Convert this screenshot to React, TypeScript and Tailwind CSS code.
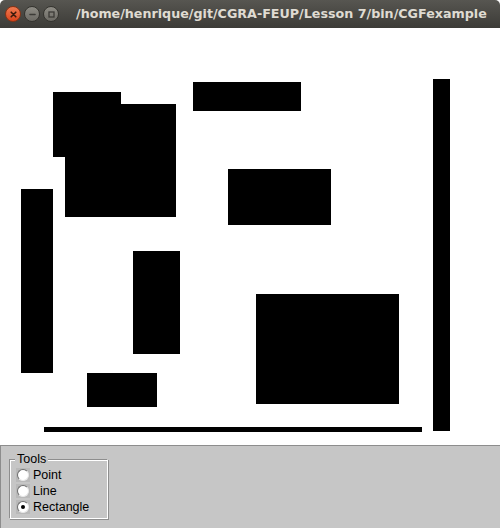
import React from 'react'

const rects = [
  { x: 53, y: 92, w: 68, h: 65 },
  { x: 65, y: 104, w: 111, h: 113 },
  { x: 193, y: 82, w: 108, h: 29 },
  { x: 228, y: 169, w: 103, h: 56 },
  { x: 21, y: 189, w: 32, h: 184 },
  { x: 133, y: 251, w: 47, h: 103 },
  { x: 87, y: 373, w: 70, h: 34 },
  { x: 256, y: 294, w: 143, h: 110 },
  { x: 433, y: 79, w: 17, h: 352 },
  { x: 44, y: 427, w: 378, h: 5 },
]

function TitleButton({ kind }: { kind: 'close' | 'min' | 'max' }) {
  const isClose = kind === 'close'
  return (
    <span
      className={`flex h-[16px] w-[16px] items-center justify-center rounded-full border ${isClose
        ? 'border-[#8a3214] bg-gradient-to-b from-[#f07a50] to-[#d9431a]'
        : 'border-[#35342f] bg-gradient-to-b from-[#8e8c85] to-[#6c6a64]'
      }`}
    >
      <svg width="9" height="9" viewBox="0 0 9 9">
        {kind === 'close' && (
          <path d="M2.2 2.2 L6.8 6.8 M6.8 2.2 L2.2 6.8" stroke="#3b1a0c" strokeWidth="1.6" strokeLinecap="round" />
        )}
        {kind === 'min' && <path d="M2 4.5 H7" stroke="#3c3b37" strokeWidth="1.6" strokeLinecap="round" />}
        {kind === 'max' && <rect x="2" y="2" width="5" height="5" fill="none" stroke="#3c3b37" strokeWidth="1.3" />}
      </svg>
    </span>
  )
}

function Radio({ label, checked }: { label: string; checked?: boolean }) {
  return (
    <div className="flex h-4 items-center">
      <span className="ml-[6px] flex h-[14px] w-[14px] items-center justify-center bg-[#b9b9b9]">
        <span className="flex h-3 w-3 items-center justify-center rounded-full border border-t-[#6e6e6e] border-l-[#6e6e6e] border-r-[#e8e8e8] border-b-[#e8e8e8] bg-white">
          {checked && <span className="h-1 w-1 rounded-full bg-black" />}
        </span>
      </span>
      <span className="ml-[3px] text-[12.5px] leading-none text-black">{label}</span>
    </div>
  )
}

export default function App() {
  return (
    <div className="flex h-[528px] w-[500px] flex-col overflow-hidden bg-white [font-family:'Liberation_Sans',Arial,sans-serif]">
      <header className="flex h-[28px] shrink-0 items-center rounded-t-[5px] bg-gradient-to-b from-[#575651] to-[#3c3b37] pl-[5px]">
        <div className="flex items-center gap-[3px]">
          <TitleButton kind="close" />
          <TitleButton kind="min" />
          <TitleButton kind="max" />
        </div>
        <span className="ml-[17px] whitespace-nowrap text-[12.7px] font-bold text-[#dfdbd2] [font-family:'DejaVu_Sans',sans-serif]">
          /home/henrique/git/CGRA-FEUP/Lesson 7/bin/CGFexample
        </span>
      </header>

      <svg className="block shrink-0" width="500" height="417" viewBox="0 28 500 417">
        <rect x="0" y="28" width="500" height="417" fill="#ffffff" />
        {rects.map((r, i) => (
          <rect key={i} x={r.x} y={r.y} width={r.w} height={r.h} fill="#000000" />
        ))}
      </svg>

      <div className="flex-1 border-t border-l border-[#8d8d8d] bg-[#c6c6c6] pl-[8px] pt-[13px]">
        <div className="relative h-[60px] w-[99px] border border-t-[#8e8e8e] border-l-[#8e8e8e] border-r-white border-b-white shadow-[inset_1px_1px_0_#ffffff,1px_1px_0_#8e8e8e]">
          <span className="absolute -top-[8px] left-[5px] bg-[#c6c6c6] px-[2px] text-[12.5px] leading-[14px] text-black">
            Tools
          </span>
          <div className="flex flex-col pt-[7px]">
            <Radio label="Point" />
            <Radio label="Line" />
            <Radio label="Rectangle" checked />
          </div>
        </div>
      </div>
    </div>
  )
}
